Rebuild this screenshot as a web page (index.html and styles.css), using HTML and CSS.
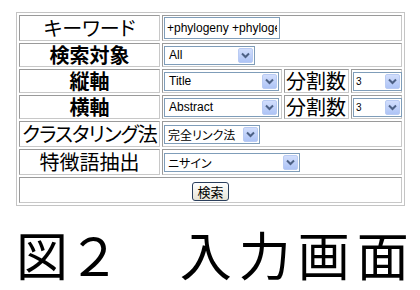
FILE: index.html
```html
<!DOCTYPE html>
<html>
<head>
  <meta charset="utf-8">
  <title>入力画面</title>
  <link rel="stylesheet" href="styles.css">
</head>
<body>
  <table class="search-form">
    <colgroup>
      <col class="col-label">
      <col class="col-value">
      <col class="col-sub">
      <col class="col-num">
    </colgroup>
    <tr class="tall">
      <th>キーワード</th>
      <td colspan="3"><input type="text" class="text-input" value="+phylogeny +phylogenetic"></td>
    </tr>
    <tr>
      <th class="bold">検索対象</th>
      <td colspan="3">
        <div class="select w-all"><span class="select-text">All</span><span class="select-btn"><svg width="9" height="7" viewBox="0 0 9 7"><path d="M1 1.5 L4.5 5 L8 1.5" fill="none" stroke="#4d6185" stroke-width="2"/></svg></span></div>
      </td>
    </tr>
    <tr>
      <th class="bold">縦軸</th>
      <td>
        <div class="select w-axis"><span class="select-text">Title</span><span class="select-btn"><svg width="9" height="7" viewBox="0 0 9 7"><path d="M1 1.5 L4.5 5 L8 1.5" fill="none" stroke="#4d6185" stroke-width="2"/></svg></span></div>
      </td>
      <th class="sub">分割数</th>
      <td>
        <div class="select w-num"><span class="select-text num">3</span><span class="select-btn"><svg width="9" height="7" viewBox="0 0 9 7"><path d="M1 1.5 L4.5 5 L8 1.5" fill="none" stroke="#4d6185" stroke-width="2"/></svg></span></div>
      </td>
    </tr>
    <tr>
      <th class="bold">横軸</th>
      <td>
        <div class="select w-axis"><span class="select-text">Abstract</span><span class="select-btn"><svg width="9" height="7" viewBox="0 0 9 7"><path d="M1 1.5 L4.5 5 L8 1.5" fill="none" stroke="#4d6185" stroke-width="2"/></svg></span></div>
      </td>
      <th class="sub">分割数</th>
      <td>
        <div class="select w-num"><span class="select-text num">3</span><span class="select-btn"><svg width="9" height="7" viewBox="0 0 9 7"><path d="M1 1.5 L4.5 5 L8 1.5" fill="none" stroke="#4d6185" stroke-width="2"/></svg></span></div>
      </td>
    </tr>
    <tr class="tall">
      <th class="narrow">クラスタリング法</th>
      <td colspan="3">
        <div class="select w-method"><span class="select-text jp">完全リンク法</span><span class="select-btn"><svg width="9" height="7" viewBox="0 0 9 7"><path d="M1 1.5 L4.5 5 L8 1.5" fill="none" stroke="#4d6185" stroke-width="2"/></svg></span></div>
      </td>
    </tr>
    <tr class="tall">
      <th>特徴語抽出</th>
      <td colspan="3">
        <div class="select w-feature"><span class="select-text jp">ニサイン</span><span class="select-btn"><svg width="9" height="7" viewBox="0 0 9 7"><path d="M1 1.5 L4.5 5 L8 1.5" fill="none" stroke="#4d6185" stroke-width="2"/></svg></span></div>
      </td>
    </tr>
    <tr class="tall">
      <td colspan="4" class="submit-cell"><button type="button" class="button">検索</button></td>
    </tr>
  </table>

  <div class="caption">
    <span>図２</span>
    <span class="caption-title">入力画面</span>
  </div>
</body>
</html>
```

FILE: styles.css
```css
body {
  margin: 12px 0 0 16px;
  background-color: white;
  font-family: "Noto Sans CJK JP", sans-serif;
  color: #000;
}
.search-form {
  border: 1px solid #c4c4c4;
  border-collapse: separate;
  border-spacing: 2px;
  table-layout: fixed;
  width: 389px;
}
.col-label { width: 141px; }
.col-value { width: 120px; }
.col-sub { width: 65px; }
.col-num { width: 51px; }
.search-form th,
.search-form td {
  border: 1px solid #9a9a9a;
  border-right-color: #c8c8c8;
  border-bottom-color: #c8c8c8;
  padding: 0 1px;
  height: 22px;
  vertical-align: middle;
  white-space: nowrap;
}
.search-form tr.tall th,
.search-form tr.tall td {
  height: 24px;
}
.search-form th {
  font-size: 20px;
  line-height: 20px;
  font-weight: normal;
  text-align: center;
  font-feature-settings: "palt";
  padding: 0;
}
.search-form th.bold {
  font-weight: bold;
}
.search-form th.narrow {
  letter-spacing: -1px;
}
.search-form th.sub {
  text-align: left;
  padding-left: 1px;
}
.text-input {
  display: block;
  width: 116px;
  height: 22px;
  box-sizing: border-box;
  margin: 0;
  padding: 0 2px;
  border: 1px solid #7f9db9;
  font-family: "Liberation Sans", sans-serif;
  font-size: 12px;
  color: #000;
  background-color: white;
}
.select {
  display: flex;
  align-items: center;
  height: 19px;
  box-sizing: border-box;
  border: 1px solid #7f9db9;
  background-color: white;
  font-family: "Liberation Sans", sans-serif;
  font-size: 12px;
}
.select-text {
  flex: 1;
  padding-left: 4px;
  overflow: hidden;
  white-space: nowrap;
}
.select-text.num {
  font-size: 10px;
  padding-left: 2px;
}
.select-text.jp {
  font-family: "Noto Sans CJK JP", sans-serif;
  font-size: 12px;
  font-feature-settings: "palt";
  padding-left: 3px;
}
.select-btn {
  display: flex;
  align-items: center;
  justify-content: center;
  width: 15px;
  height: 15px;
  margin-right: 1px;
  border: 1px solid #b9cbf3;
  box-sizing: border-box;
  border-radius: 2px;
  background: linear-gradient(#d2defc, #aec4f6);
}
.w-all { width: 91px; }
.w-axis { width: 115px; }
.w-num { width: 49px; }
.w-method { width: 96px; }
.w-feature { width: 136px; }
.submit-cell {
  text-align: center;
}
.button {
  width: 37px;
  height: 19px;
  padding: 0;
  border: 1px solid #2b3f5c;
  border-radius: 3px;
  background: linear-gradient(#ffffff, #e6e3d6);
  font-family: "Noto Sans CJK JP", sans-serif;
  font-size: 13px;
  line-height: 15px;
  color: #000;
}
.caption {
  margin-top: 20px;
  font-size: 52px;
  line-height: 56px;
  white-space: nowrap;
}
.caption-title {
  margin-left: 48px;
  letter-spacing: 7px;
}
```
